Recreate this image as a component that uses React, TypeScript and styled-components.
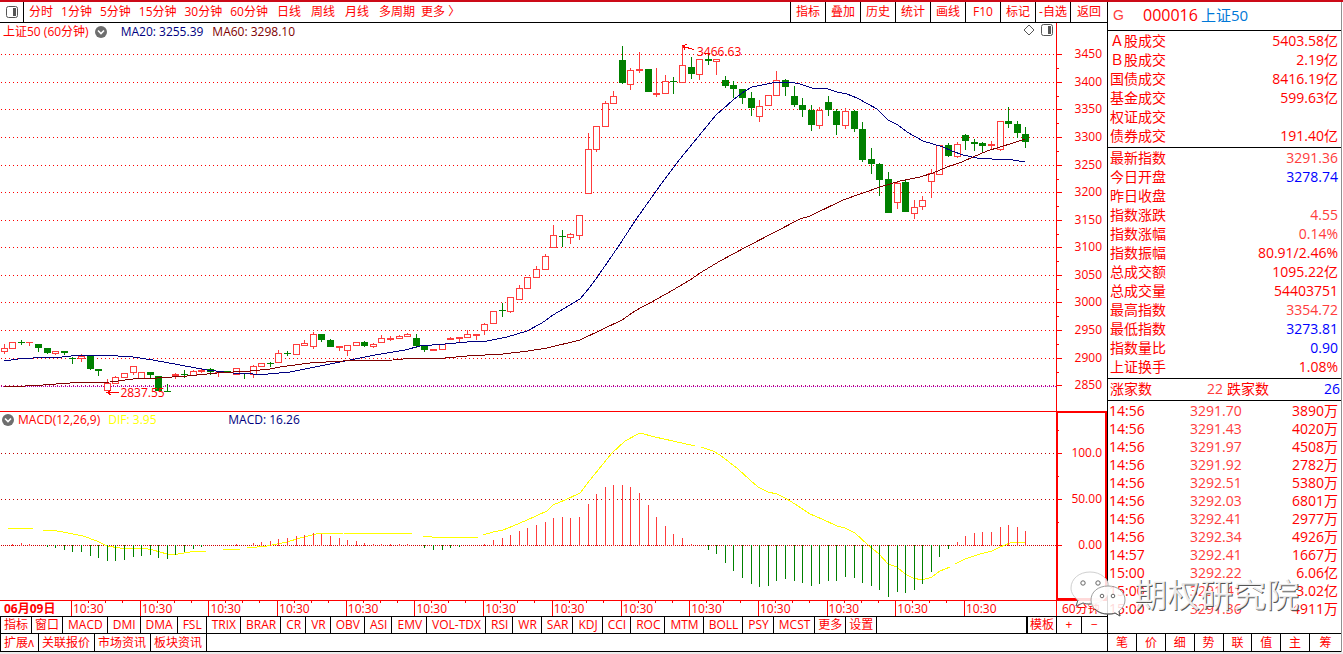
import React from 'react';
import styled, { createGlobalStyle } from 'styled-components';

const RED = '#ff0000';
const SOFT_RED = '#ff3c3c';
const GREEN = '#008000';
const NAVY = '#000080';
const MAROON = '#800000';
const BLUE = '#0000ff';

const GlobalStyle = createGlobalStyle`
  * { box-sizing: border-box; }
  body {
    margin: 0;
    background: #fff;
    color: ${RED};
    font: 12px/16px "Open Sans", "Noto Sans CJK SC", sans-serif;
  }
  button {
    margin: 0;
    padding: 0;
    border: 0;
    background: none;
    color: inherit;
    font: inherit;
    white-space: nowrap;
    cursor: pointer;
  }
`;

/* ---------- data ---------- */

type Candle = [color: 'r' | 'g', high: number, top: number, bottom: number, low: number];

const candles: Candle[] = [
  ['r', 344, 348, 351, 353], ['r', 342, 342, 348, 348], ['g', 340, 342, 342, 344], ['r', 342, 342, 342, 345],
  ['g', 344, 344, 347, 351], ['g', 348, 348, 352, 353], ['r', 351, 351, 353, 354], ['g', 351, 351, 352, 354],
  ['g', 357, 358, 358, 363], ['r', 354, 356, 358, 361], ['g', 355, 356, 368, 369], ['g', 369, 369, 370, 375],
  ['r', 379, 383, 390, 390], ['r', 376, 377, 383, 383], ['r', 373, 373, 377, 377], ['r', 366, 366, 372, 374],
  ['r', 372, 372, 378, 378], ['g', 372, 372, 374, 378], ['g', 376, 376, 390, 390], ['g', 384, 391, 391, 391],
  ['r', 373, 374, 375, 378], ['g', 370, 374, 374, 377], ['r', 370, 371, 375, 375], ['r', 369, 370, 371, 372],
  ['g', 368, 369, 371, 374], ['r', 372, 372, 372, 376], ['g', 371, 371, 371, 371], ['r', 368, 368, 374, 374],
  ['g', 373, 373, 373, 378], ['r', 365, 366, 374, 377], ['r', 363, 363, 366, 366], ['g', 362, 363, 363, 366],
  ['r', 350, 353, 362, 362], ['g', 351, 353, 353, 355], ['r', 344, 344, 354, 354], ['r', 340, 343, 345, 345],
  ['r', 332, 334, 346, 348], ['g', 334, 334, 339, 341], ['g', 339, 340, 346, 346], ['r', 346, 346, 347, 350],
  ['r', 345, 345, 350, 355], ['r', 342, 342, 345, 345], ['g', 341, 342, 345, 346], ['r', 343, 344, 346, 347],
  ['r', 335, 338, 342, 342], ['r', 336, 338, 339, 340], ['r', 335, 336, 338, 338], ['r', 333, 334, 336, 336],
  ['g', 334, 338, 345, 347], ['g', 346, 346, 349, 351], ['r', 349, 349, 350, 350], ['r', 344, 344, 349, 349],
  ['r', 337, 338, 339, 339], ['r', 337, 337, 338, 341], ['r', 330, 334, 337, 337], ['r', 334, 334, 335, 339],
  ['r', 323, 324, 330, 334], ['r', 311, 311, 323, 323], ['g', 303, 310, 310, 316], ['r', 297, 297, 311, 312],
  ['r', 285, 288, 299, 299], ['r', 277, 277, 288, 288], ['r', 266, 269, 277, 277], ['r', 254, 256, 269, 269],
  ['r', 225, 235, 247, 247], ['g', 230, 236, 236, 246], ['r', 233, 234, 237, 243], ['r', 215, 215, 235, 239],
  ['r', 133, 149, 193, 193], ['r', 126, 126, 149, 151], ['r', 101, 103, 126, 126], ['r', 91, 96, 103, 103],
  ['g', 46, 60, 82, 83], ['r', 68, 70, 84, 89], ['r', 52, 69, 70, 72], ['g', 69, 69, 91, 91],
  ['r', 68, 93, 94, 96], ['r', 75, 81, 93, 93], ['g', 77, 81, 81, 93], ['r', 45, 65, 82, 82],
  ['g', 57, 67, 73, 78], ['r', 59, 59, 74, 79], ['g', 53, 59, 60, 64], ['r', 59, 59, 61, 74],
  ['g', 76, 80, 85, 87], ['g', 81, 85, 88, 97], ['g', 89, 89, 97, 103], ['g', 92, 98, 107, 115],
  ['r', 100, 106, 116, 121], ['r', 95, 95, 105, 105], ['r', 71, 80, 95, 95], ['g', 79, 80, 86, 95],
  ['g', 86, 96, 104, 106], ['g', 98, 105, 109, 116], ['g', 105, 110, 124, 130], ['r', 107, 110, 125, 128],
  ['g', 96, 102, 109, 115], ['g', 109, 111, 124, 134], ['r', 108, 111, 125, 128], ['g', 110, 111, 128, 131],
  ['g', 122, 129, 159, 161], ['g', 148, 159, 163, 173], ['g', 163, 164, 179, 195], ['g', 172, 179, 212, 212],
  ['r', 182, 183, 202, 208], ['g', 179, 182, 211, 211], ['r', 200, 207, 213, 218], ['r', 196, 200, 206, 209],
  ['r', 169, 173, 181, 197], ['r', 145, 145, 174, 174], ['g', 143, 145, 155, 156], ['r', 142, 144, 156, 157],
  ['g', 134, 135, 140, 149], ['g', 139, 142, 143, 150], ['g', 142, 143, 145, 151], ['r', 141, 144, 145, 149],
  ['r', 121, 121, 149, 150], ['g', 107, 121, 123, 127], ['g', 121, 124, 132, 137], ['g', 127, 134, 141, 147],
];

const histogram = [
  0, 1, 2, 1, 0, -1, -2, -4, -6, -6, -10, -12, -15, -15, -14, -11, -10, -9, -12, -13, -9, -6, -3, -1, 0, 0, 0, 1, 0, 2,
  3, 4, 6, 7, 9, 10, 12, 11, 9, 7, 5, 4, 2, 1, 1, 1, 1, 1, 0, -2, -4, -4, -2, -1, 0, 0, 1, 5, 7, 10,
  14, 17, 20, 23, 27, 28, 27, 28, 41, 51, 58, 60, 60, 58, 52, 40, 28, 19, 11, 7, 1, 0, -4, -8, -17, -25, -32, -38, -41, -40,
  -35, -33, -35, -37, -40, -38, -35, -35, -31, -32, -37, -40, -44, -51, -46, -47, -44, -38, -26, -11, -3, 3, 9, 12, 13, 13, 18, 20, 18, 14,
];

const ma20 =
  '4,361 18,359 33,358 62,357 80,355 103,355 133,357 153,360 180,365 207,370 233,373 253,374 268,374 290,372 320,366 345,361 375,355 405,350 420,346 445,344 467,342 487,341 507,337 527,331 540,324 545,321 553,315 580,299 590,287 598,276 618,247 637,218 664,180 680,159 698,137 716,115 723,109 733,100 742,93 752,87 767,84 777,82 790,82 800,84 812,88 828,89 837,92 847,94 857,98 868,104 877,109 888,120 898,125 907,132 923,141 943,147 952,151 963,155 977,158 992,159 1013,160 1025,162';
const ma60 =
  '4,387 25,386 43,385 70,383 110,382 133,379 157,378 187,376 217,373 250,371 270,369 280,367 310,363 343,361 393,360 413,358 445,358 467,356 503,354 528,351 547,348 580,340 603,329 622,320 632,313 640,308 650,303 673,290 690,280 700,273 720,261 746,247 775,232 800,219 810,216 843,200 863,193 880,187 900,181 920,177 933,173 947,167 962,162 973,157 987,151 1000,147 1013,143 1025,139';
const difSegments = [
  '8,529 17,528 33,528',
  '43,530 52,530 68,533 83,536 97,541 107,546 120,548 143,548 153,550 167,554 178,554 190,552 206,551',
  '223,549 240,549',
  '247,548 267,546 287,542 300,538 320,533 343,533 377,534 396,533 412,533',
  '423,536 440,538 455,537 478,537',
  '483,535 493,532 503,530 513,526 527,520 547,511 553,505 565,500 580,493 590,480 603,464 612,453 625,441 640,433 655,437 673,441 695,446',
  '701,447 713,451 720,455 738,469 750,480 758,487 768,492 777,494 787,499 798,506 810,514 822,519 837,526 845,528 855,533 868,545 879,554 888,564 897,567 905,574 913,578 922,580 932,577 940,571 950,567',
  '955,564 965,559 980,554 992,551 1000,547 1010,543 1025,542',
];

const priceScale: [number, number][] = [
  [3450, 54], [3400, 82], [3350, 109], [3300, 137], [3250, 165], [3200, 192], [3150, 220],
  [3100, 247], [3050, 275], [3000, 302], [2950, 330], [2900, 358], [2850, 385],
];
const macdScale: [string, number][] = [['100.0', 453], ['50.00', 499], ['0.00', 545]];

const minutePeriods = ['分时', '1分钟', '5分钟', '15分钟', '30分钟', '60分钟'];
const longPeriods = ['日线', '周线', '月线', '多周期'];
const tools = ['指标', '叠加', '历史', '统计', '画线', 'F10', '标记', '-自选', '返回'];
const indicators = [
  '指标', '窗口', 'MACD', 'DMI', 'DMA', 'FSL', 'TRIX', 'BRAR', 'CR', 'VR', 'OBV', 'ASI', 'EMV', 'VOL-TDX',
  'RSI', 'WR', 'SAR', 'KDJ', 'CCI', 'ROC', 'MTM', 'BOLL', 'PSY', 'MCST', '更多', '设置',
];
const infoTabs = ['扩展ʌ', '关联报价', '市场资讯', '板块资讯'];
const sideTabs = ['笔', '价', '细', '势', '联', '值', '主', '筹'];

type Quote = [label: string, value: string, color?: string];
const turnover: Quote[] = [
  ['Ａ股成交', '5403.58亿'], ['Ｂ股成交', '2.19亿'], ['国债成交', '8416.19亿'],
  ['基金成交', '599.63亿'], ['权证成交', ''], ['债券成交', '191.40亿'],
];
const quotes: Quote[] = [
  ['最新指数', '3291.36', SOFT_RED], ['今日开盘', '3278.74', BLUE], ['昨日收盘', ''],
  ['指数涨跌', '4.55', SOFT_RED], ['指数涨幅', '0.14%', SOFT_RED], ['指数振幅', '80.91/2.46%'],
  ['总成交额', '1095.22亿'], ['总成交量', '54403751'], ['最高指数', '3354.72', SOFT_RED],
  ['最低指数', '3273.81', BLUE], ['指数量比', '0.90', BLUE], ['上证换手', '1.08%'],
];
const ticks = [
  ['14:56', '3291.70', '3890万'], ['14:56', '3291.43', '4020万'], ['14:56', '3291.97', '4508万'],
  ['14:56', '3291.92', '2782万'], ['14:56', '3292.51', '5380万'], ['14:56', '3292.03', '6801万'],
  ['14:56', '3292.41', '2977万'], ['14:56', '3292.34', '4926万'], ['14:57', '3292.41', '1667万'],
  ['15:00', '3292.22', '6.06亿'], ['15:00', '3291.41', '3.02亿'], ['15:00', '3291.36', '4911万'],
];

/* ---------- styled parts ---------- */

const Page = styled.div`
  position: relative;
  display: grid;
  grid-template-columns: minmax(0, 1fr) 236px;
  border-top: 2px solid #cc0a18;
  border-bottom: 2px solid #ececec;
`;

const Workspace = styled.main`
  display: flex;
  flex-direction: column;
  min-width: 0;
`;

const Toolbar = styled.nav`
  display: flex;
  height: 21px;
  border-bottom: 1px solid #000;
  line-height: 18px;
`;

const LayoutButton = styled.button`
  display: flex;
  align-items: center;
  justify-content: center;
  width: 24px;
  border-right: 1px solid #000;
`;

const Periods = styled.div<{ $gap: number }>`
  display: flex;
  gap: ${(p) => p.$gap}px;
  padding-left: ${(p) => (p.$gap === 8 ? 5 : 9)}px;
`;

const MoreButton = styled.button`
  padding-left: 6px;
`;

const Tools = styled.div`
  display: flex;
  margin-left: auto;
`;

const ToolButton = styled.button`
  width: 35px;
  border-left: 1px solid #000;
  text-align: center;

  &:last-child { width: 37px; }
`;

const ChartSection = styled.section<{ $divided?: boolean }>`
  display: grid;
  grid-template-columns: minmax(0, 1fr) 51px;
  border-top: ${(p) => (p.$divided ? `1px solid ${RED}` : '0')};
`;

const Plot = styled.div`
  position: relative;
  min-width: 0;
`;

const PlotHeader = styled.header<{ $height: number; $inset: number }>`
  display: flex;
  align-items: center;
  height: ${(p) => p.$height}px;
  padding: 0 3px 0 ${(p) => p.$inset}px;
  white-space: nowrap;
`;

const Legend = styled.span<{ $color: string; $gap?: number }>`
  margin-left: ${(p) => p.$gap ?? 0}px;
  color: ${(p) => p.$color};
`;

const DifLegend = styled(Legend)`
  width: 120px;
`;

const Collapse = styled.button<{ $gap?: number }>`
  display: flex;
  margin-left: ${(p) => p.$gap ?? 0}px;
`;

const HeaderTools = styled.div`
  display: flex;
  gap: 6px;
  margin-left: auto;
`;

const PlotSvg = styled.svg<{ $height: number }>`
  display: block;
  width: 100%;
  height: ${(p) => p.$height}px;
`;

const Callout = styled.span<{ $left: number; $top: number }>`
  position: absolute;
  left: ${(p) => p.$left}%;
  top: ${(p) => p.$top}px;
`;

const PriceAxis = styled.div`
  border-left: 1px solid ${RED};
`;

const MacdAxis = styled.div`
  margin-top: -1px;
  border: 2px solid ${RED};
`;

const AxisSvg = styled.svg`
  display: block;
  font-size: 12px;
`;

const TimeAxis = styled.div`
  display: grid;
  grid-template-columns: 71px repeat(13, minmax(0, 1fr)) 92px 51px;
  height: 16px;
  border-top: 1px solid ${RED};
  white-space: nowrap;
`;

const TimeDate = styled.strong`
  padding-left: 4px;
`;

const TimeCell = styled.span<{ $ticks?: boolean; $indent?: number }>`
  padding-left: ${(p) => p.$indent ?? 1}px;
  border-left: 1px solid ${RED};
  background: ${(p) =>
    p.$ticks
      ? `repeating-linear-gradient(90deg, transparent 0 16px, ${RED} 16px 17px) 0 0 / 52px 2px no-repeat`
      : 'none'};
`;

const TabBar = styled.nav<{ $height: number; $last?: boolean }>`
  display: flex;
  height: ${(p) => p.$height}px;
  border-top: 1px solid #000;
  border-bottom: ${(p) => (p.$last ? '1px solid #000' : '0')};
  border-left: 1px solid #000;
`;

const Tab = styled.button<{ $left: number; $right: number }>`
  padding: 0 ${(p) => p.$right}px 0 ${(p) => p.$left}px;
  border-right: 1px solid #000;
`;

const TabEnd = styled.div`
  display: flex;
  margin-left: auto;
  border-left: 2px solid #000;
`;

const ZoomButton = styled.button`
  width: 25px;
`;

const TemplateButton = styled.button`
  width: 29px;
  border-right: 1px solid #000;
`;

const ZoomInButton = styled(ZoomButton)`
  border-right: 1px solid #000;
`;

const SidePanel = styled.aside`
  display: flex;
  flex-direction: column;
  margin-right: 1px;
  border-left: 1px solid #000;
  border-right: 1px solid #909090;
  font-size: 14px;
`;

const SideHeader = styled.header`
  display: flex;
  align-items: center;
  height: 29px;
  padding: 0 0 3px 5px;
  border-bottom: 1px solid #000;
`;

const GroupMark = styled.span`
  width: 30px;
  color: ${SOFT_RED};
  font-family: "Liberation Sans", sans-serif;
  font-size: 14px;
`;

const Code = styled.span`
  width: 58px;
  font-size: 16px;
`;

const StockName = styled.span`
  color: #0078d7;
  font-size: 15px;
`;

const SideSection = styled.div`
  padding: 0 2px 2px 2px;
  border-bottom: 1px solid #000;
`;

const TickSection = styled.div`
  flex: 1;
  padding: 1px 3px 0 1px;
`;

const DataTable = styled.table<{ $row: number }>`
  width: 100%;
  border-collapse: collapse;
  line-height: ${(p) => p.$row}px;

  th, td {
    height: ${(p) => p.$row}px;
    padding: 0;
    font-weight: 400;
    text-align: left;
    white-space: nowrap;
  }
`;

const Value = styled.td<{ $color?: string }>`
  && {
    padding-right: 1px;
    color: ${(p) => p.$color ?? RED};
    text-align: right;
  }
`;

const TickPrice = styled.td`
  && {
    width: 97px;
    color: ${SOFT_RED};
    text-align: right;
  }
`;

const TickTime = styled.td`
  width: 34px;
`;

const TickVolume = styled.td`
  && {
    text-align: right;
  }
`;

const Breadth = styled.dl`
  display: flex;
  height: 22px;
  margin: 0;
  padding: 0 1px 0 2px;
  border-bottom: 1px solid #000;
  line-height: 19px;
`;

const BreadthLabel = styled.dt`
  width: 42px;
`;

const BreadthValue = styled.dd<{ $color: string; $pad?: number }>`
  flex: 1;
  margin: 0;
  padding-right: ${(p) => p.$pad ?? 0}px;
  color: ${(p) => p.$color};
  text-align: right;
`;

const SideTabs = styled.nav`
  display: grid;
  grid-template-columns: 28px repeat(6, 1fr) 32px;
  height: 19px;
  border-top: 1px solid #000;
  border-bottom: 1px solid #000;
  font-size: 12px;
`;

const SideTab = styled.button`
  border-left: 1px solid #000;

  &:first-child { border-left: 0; }
`;

const Watermark = styled.div`
  position: absolute;
  right: 42px;
  bottom: 34px;
  display: flex;
  align-items: center;
  gap: 8px;
  pointer-events: none;
`;

const WatermarkText = styled.span`
  margin-right: 2px;
  padding-top: 2px;
  color: rgba(255, 255, 255, 0.9);
  font-size: 33px;
  line-height: 46px;
  text-shadow: 1px 1px 0 #555;
`;

/* ---------- icons ---------- */

const PanelIcon = () => (
  <svg width="12" height="12" viewBox="0 0 12 12" aria-hidden="true">
    <rect x="0.5" y="0.5" width="11" height="11" rx="2" fill="none" stroke="#555" />
    <rect x="7" y="2" width="3" height="8" fill="#555" />
  </svg>
);

const DiamondIcon = () => (
  <svg width="12" height="12" viewBox="0 0 12 12" aria-hidden="true">
    <path d="M6 1 L11 6 L6 11 L1 6 Z" fill="none" stroke="#555" />
  </svg>
);

const ChevronIcon = () => (
  <svg width="12" height="12" viewBox="0 0 12 12" aria-hidden="true">
    <circle cx="6" cy="6" r="6" fill="#6e6e6e" />
    <path d="M3 4.5 L6 7.5 L9 4.5" fill="none" stroke="#fff" strokeWidth="1.6" />
  </svg>
);

const WechatLogo = () => (
  <svg width="56" height="48" viewBox="0 0 56 48" aria-hidden="true">
    <g fill="#fff" fillOpacity="0.85" strokeLinejoin="round">
      <path
        d="M20 2 C9 2 1 9 1 18 C1 23 4 27 8 30 L6 36 L13 33 C15 34 18 34 21 34 C31 34 39 27 39 18 C39 9 31 2 20 2 Z"
        stroke="#d0d0d0"
      />
      <path d="M8 30 L6 36 L13 33 C15 34 18 34 21 34" fill="none" stroke="#666" />
      <path
        d="M38 16 C28 16 21 22 21 30 C21 38 28 44 38 44 C41 44 43 44 45 43 L50 46 L49 41 C53 38 55 34 55 30 C55 22 48 16 38 16 Z"
        stroke="#a0a0a0"
      />
      <path d="M25 39 C29 43 33 44 38 44 C41 44 43 44 45 43 L50 46 L49 41" fill="none" stroke="#555" />
    </g>
    <g fill="#fff" stroke="#666">
      <circle cx="13" cy="13" r="2.2" />
      <circle cx="28" cy="13" r="2.2" />
      <circle cx="32" cy="26" r="1.8" />
      <circle cx="43" cy="26" r="1.8" />
    </g>
  </svg>
);

/* ---------- charts ---------- */

const barX = (i: number) => Math.floor(4.23 + 8.585 * i);

const CandleMark = ({ candle, index }: { candle: Candle; index: number }) => {
  const [kind, high, top, bottom, low] = candle;
  const x = barX(index);
  const color = kind === 'r' ? SOFT_RED : GREEN;
  const height = bottom - top + 1;
  const hollow = kind === 'r' && height > 2;
  return (
    <g fill={color}>
      {high < top && <rect x={x} y={high} width="1" height={top - high} />}
      {low > bottom && <rect x={x} y={bottom} width="1" height={low - bottom + 1} />}
      {hollow ? (
        <rect x={x - 2.5} y={top + 0.5} width="6" height={height - 1} fill="#fff" stroke={color} />
      ) : (
        <rect x={x - 3} y={top} width="7" height={height} />
      )}
    </g>
  );
};

const PriceChart = () => (
  <PlotSvg $height={370} viewBox="0 41 1056 370" preserveAspectRatio="none" shapeRendering="crispEdges" role="img" aria-label="上证50 60分钟K线">
    {priceScale.slice(0, 12).map(([price, y]) => (
      <line key={price} x1="1" x2="1056" y1={y + 0.5} y2={y + 0.5} stroke={RED} strokeDasharray="1 3" />
    ))}
    <line x1="1" x2="1056" y1="386.5" y2="386.5" stroke="#b000b0" strokeDasharray="1 1" />
    <line x1="1" x2="1056" y1="385.5" y2="385.5" stroke="#c00060" strokeDasharray="1 3" />
    {candles.map((candle, i) => (
      <CandleMark key={i} candle={candle} index={i} />
    ))}
    <polyline points={ma20} fill="none" stroke={NAVY} />
    <polyline points={ma60} fill="none" stroke={MAROON} />
    <path d="M107 392.5 H119 M111 390 L107 392.5 L111 395" fill="none" stroke={RED} />
    <path d="M683 46.5 L694 49.5 M687 44.5 L683 45.5 L685 49.5" fill="none" stroke={RED} />
  </PlotSvg>
);

const MacdChart = () => (
  <PlotSvg $height={172} viewBox="0 428 1056 172" preserveAspectRatio="none" shapeRendering="crispEdges" role="img" aria-label="MACD">
    {[453, 499].map((y) => (
      <line key={y} x1="1" x2="1056" y1={y + 0.5} y2={y + 0.5} stroke="#c00000" strokeDasharray="1 3" />
    ))}
    <line x1="1" x2="1056" y1="545.5" y2="545.5" stroke="#d00000" strokeDasharray="1 1" />
    {difSegments.map((points) => (
      <polyline key={points} points={points} fill="none" stroke="#ffff00" />
    ))}
    {histogram.map((h, i) =>
      h === 0 ? null : (
        <rect key={i} x={barX(i)} y={h > 0 ? 545 - h : 545} width="1" height={Math.abs(h) + 1} fill={h > 0 ? SOFT_RED : GREEN} />
      ),
    )}
  </PlotSvg>
);

const PriceScale = () => (
  <AxisSvg width="50" height="388" viewBox="0 23 50 388" shapeRendering="crispEdges">
    {priceScale.map(([price, y], i) => (
      <g key={price} fill={RED}>
        <rect x="0" y={y} width="5" height="1" />
        {i < 12 && <rect x="0" y={y + 14} width="2" height="1" />}
        <text x="45" y={y + 4} textAnchor="end">{price}</text>
      </g>
    ))}
  </AxisSvg>
);

const MacdScale = () => (
  <AxisSvg width="47" height="185" viewBox="0 413 47 185" shapeRendering="crispEdges">
    {macdScale.map(([label, y]) => (
      <g key={label} fill={RED}>
        <rect x="0" y={y} width="4" height="1" />
        <rect x="0" y={y - 23} width="1" height="1" />
        <text x="44" y={y + 4} textAnchor="end">{label}</text>
      </g>
    ))}
  </AxisSvg>
);

/* ---------- page ---------- */

const QuoteTable = ({ rows }: { rows: Quote[] }) => (
  <DataTable $row={19}>
    <tbody>
      {rows.map(([label, value, color]) => (
        <tr key={label}>
          <th scope="row">{label}</th>
          <Value $color={color}>{value}</Value>
        </tr>
      ))}
    </tbody>
  </DataTable>
);

const isCjk = (text: string) => /^[\u4e00-\u9fff]{2}$/.test(text);

export default function App() {
  return (
    <Page>
      <GlobalStyle />
      <Workspace>
        <Toolbar>
          <LayoutButton aria-label="布局"><PanelIcon /></LayoutButton>
          <Periods $gap={8}>
            {minutePeriods.map((p) => <button key={p}>{p}</button>)}
          </Periods>
          <Periods $gap={10}>
            {longPeriods.map((p) => <button key={p}>{p}</button>)}
          </Periods>
          <MoreButton>更多 〉</MoreButton>
          <Tools>
            {tools.map((t) => <ToolButton key={t}>{t}</ToolButton>)}
          </Tools>
        </Toolbar>

        <ChartSection>
          <Plot>
            <PlotHeader $height={18} $inset={3}>
              <Legend $color={RED}>上证50 (60分钟)</Legend>
              <Collapse $gap={6} aria-label="折叠"><ChevronIcon /></Collapse>
              <Legend $color={NAVY} $gap={14}>MA20: 3255.39</Legend>
              <Legend $color={MAROON} $gap={9}>MA60: 3298.10</Legend>
              <HeaderTools>
                <button aria-label="标记"><DiamondIcon /></button>
                <button aria-label="侧栏"><PanelIcon /></button>
              </HeaderTools>
            </PlotHeader>
            <PriceChart />
            <Callout $left={66} $top={21}>3466.63</Callout>
            <Callout $left={11.4} $top={362}>2837.55</Callout>
          </Plot>
          <PriceAxis><PriceScale /></PriceAxis>
        </ChartSection>

        <ChartSection $divided>
          <Plot>
            <PlotHeader $height={16} $inset={2}>
              <Collapse aria-label="折叠"><ChevronIcon /></Collapse>
              <Legend $color={RED} $gap={4}>MACD(12,26,9)</Legend>
              <DifLegend $color="#ffff00" $gap={8}>DIF: 3.95</DifLegend>
              <Legend $color={NAVY}>MACD: 16.26</Legend>
            </PlotHeader>
            <MacdChart />
          </Plot>
          <MacdAxis><MacdScale /></MacdAxis>
        </ChartSection>

        <TimeAxis>
          <TimeDate>06月09日</TimeDate>
          {Array.from({ length: 14 }, (_, i) => (
            <TimeCell key={i} $ticks={i < 13}>10:30</TimeCell>
          ))}
          <TimeCell $indent={5}>60分钟</TimeCell>
        </TimeAxis>

        <TabBar $height={17}>
          {indicators.map((name) => (
            <Tab key={name} $left={isCjk(name) ? 3 : 5} $right={isCjk(name) ? 3 : 4}>{name}</Tab>
          ))}
          <TabEnd>
            <TemplateButton>模板</TemplateButton>
            <ZoomInButton aria-label="放大">+</ZoomInButton>
            <ZoomButton aria-label="缩小">−</ZoomButton>
          </TabEnd>
        </TabBar>
        <TabBar $height={19} $last>
          {infoTabs.map((name) => <Tab key={name} $left={3} $right={4}>{name}</Tab>)}
        </TabBar>
      </Workspace>

      <SidePanel>
        <SideHeader>
          <GroupMark>G</GroupMark>
          <Code>000016</Code>
          <StockName>上证50</StockName>
        </SideHeader>
        <SideSection><QuoteTable rows={turnover} /></SideSection>
        <SideSection><QuoteTable rows={quotes} /></SideSection>
        <Breadth>
          <BreadthLabel>涨家数</BreadthLabel>
          <BreadthValue $color={SOFT_RED} $pad={4}>22</BreadthValue>
          <BreadthLabel>跌家数</BreadthLabel>
          <BreadthValue $color={BLUE}>26</BreadthValue>
        </Breadth>
        <TickSection>
          <DataTable $row={18}>
            <tbody>
              {ticks.map(([time, price, volume], i) => (
                <tr key={i}>
                  <TickTime>{time}</TickTime>
                  <TickPrice>{price}</TickPrice>
                  <TickVolume>{volume}</TickVolume>
                </tr>
              ))}
            </tbody>
          </DataTable>
        </TickSection>
        <SideTabs>
          {sideTabs.map((name) => <SideTab key={name}>{name}</SideTab>)}
        </SideTabs>
      </SidePanel>

      <Watermark>
        <WechatLogo />
        <WatermarkText>期权研究院</WatermarkText>
      </Watermark>
    </Page>
  );
}
